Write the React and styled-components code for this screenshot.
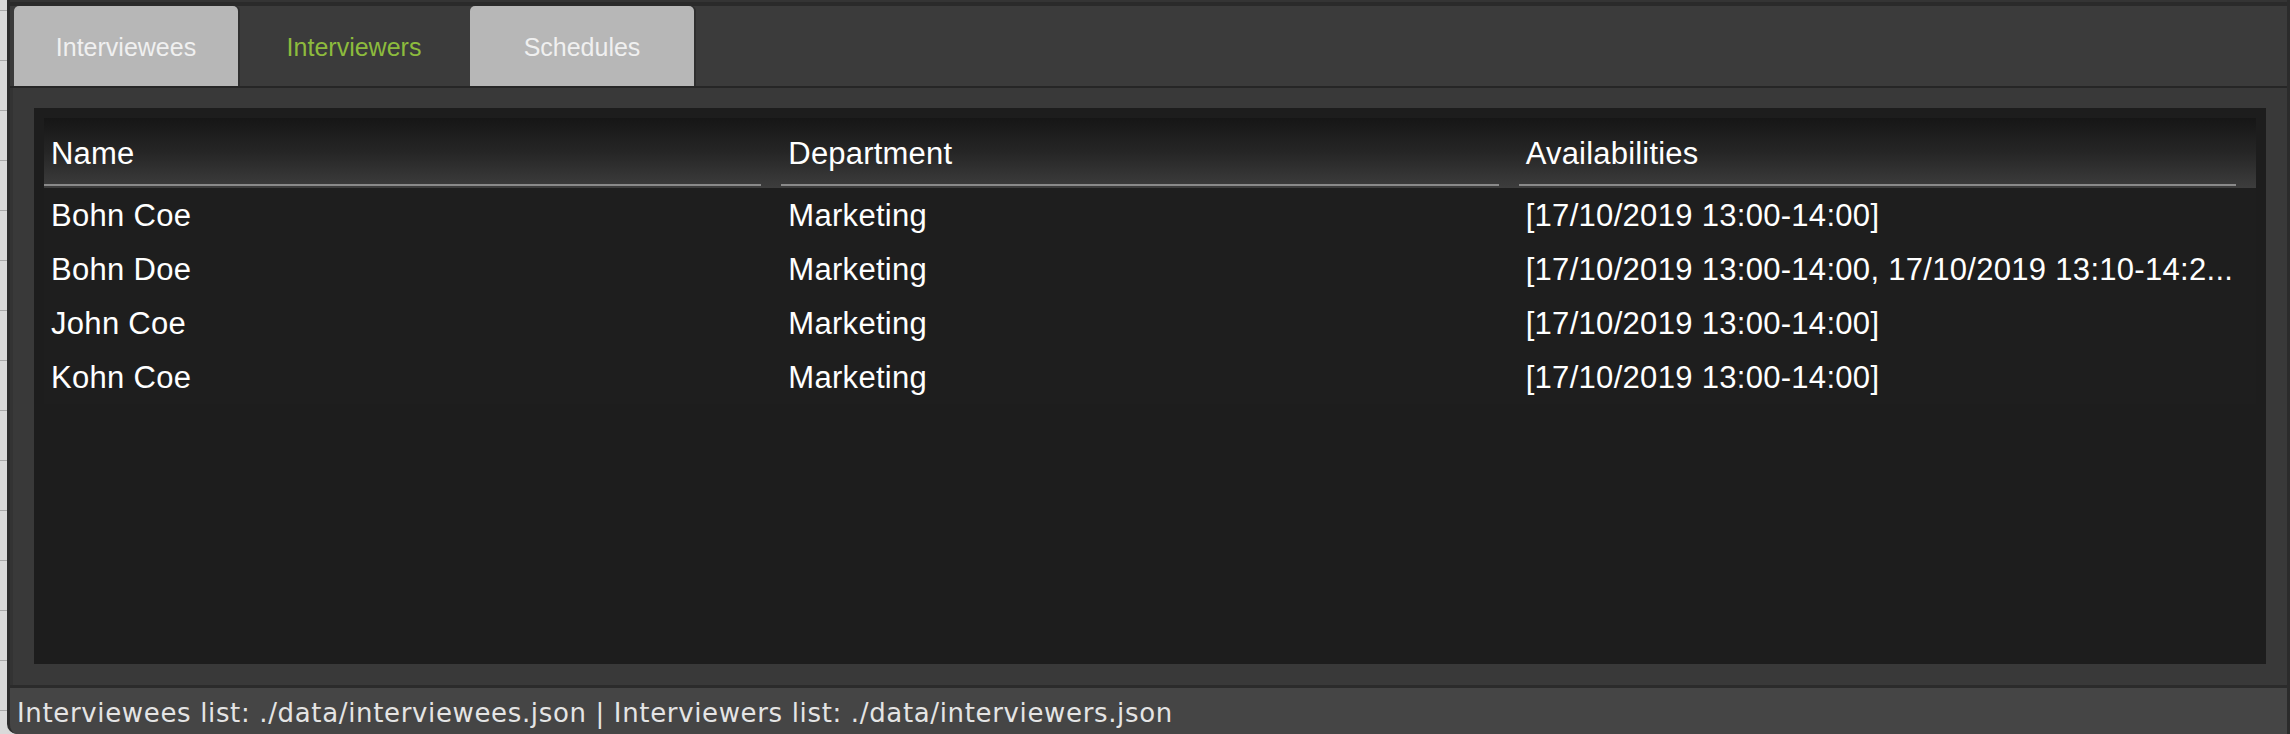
import React from 'react';
import styled, { createGlobalStyle } from 'styled-components';

const GlobalStyle = createGlobalStyle`
  html, body {
    margin: 0;
    padding: 0;
    width: 2290px;
    height: 734px;
    overflow: hidden;
    background: #d9d9d9;
  }
  * { box-sizing: border-box; }
`;

const Screen = styled.div`
  display: flex;
  width: 2290px;
  height: 734px;
  background: #d9d9d9;
`;

const DesktopStrip = styled.div`
  width: 7px;
  flex: none;
  background-color: #dadada;
  background-image: repeating-linear-gradient(
    to bottom,
    transparent 0,
    transparent 10px,
    #a9a9a9 10px,
    #a9a9a9 11px,
    transparent 11px,
    transparent 50px
  );
`;

const Window = styled.div`
  flex: 1;
  display: flex;
  flex-direction: column;
  border-left: 3px solid #2d2d2d;
  border-right: 3px solid #2b2b2b;
  border-bottom-left-radius: 10px;
  overflow: hidden;
  background: #393939;
`;

const TopEdge = styled.div`
  height: 6px;
  flex: none;
  background: linear-gradient(to bottom, #343434 0, #343434 2px, #2a2a2a 2px);
`;

const TabBar = styled.div`
  height: 82px;
  flex: none;
  display: flex;
  gap: 4px;
  padding-left: 4px;
  background: #3b3b3b;
  border-bottom: 2px solid #262626;
`;

const Tab = styled.div`
  width: 224px;
  height: 80px;
  padding-top: 3px;
  line-height: 77px;
  text-align: center;
  font-family: "Liberation Sans", Arial, sans-serif;
  font-size: 25px;
  border-radius: 5px 5px 0 0;
  background: ${(p) => (p.$active ? 'transparent' : '#b7b7b7')};
  color: ${(p) => (p.$active ? '#8dbb3d' : '#f0f0f0')};
  box-shadow: ${(p) => (p.$active ? 'none' : '2px 0 0 #2f2f2f')};
`;

const Panel = styled.div`
  flex: 1;
  display: flex;
  flex-direction: column;
  padding: 20px 21px 21px 21px;
  border-left: 3px solid #333333;
  background: #393939;
`;

const TableBox = styled.div`
  flex: 1;
  padding: 10px;
  background: #1d1d1d;
  display: flex;
  flex-direction: column;
`;

const HeaderRow = styled.div`
  display: grid;
  grid-template-columns: repeat(3, 1fr);
  height: 70px;
  background: linear-gradient(to bottom, #161616 0%, #262626 50%, #3d3d3d 100%);
`;

const HeaderCell = styled.div`
  display: flex;
  flex-direction: column;
  padding-top: 18px;
  padding-bottom: 2px;
  min-width: 0;
`;

const HeaderLabel = styled.div`
  height: 36px;
  line-height: 36px;
  padding-left: 7px;
  font-family: "Liberation Sans", Arial, sans-serif;
  font-size: 31px;
  letter-spacing: 0.2px;
  color: #ffffff;
  white-space: nowrap;
`;

const HeaderRule = styled.div`
  margin-top: 12px;
  margin-right: 20px;
  height: 2px;
  background: #8a8a8a;
`;

const Row = styled.div`
  display: grid;
  grid-template-columns: repeat(3, 1fr);
  height: 54px;
  padding-top: 2px;
  background: #1e1e1e;
`;

const Cell = styled.div`
  min-width: 0;
  padding-left: 7px;
  padding-right: 20px;
  line-height: 52px;
  font-family: "Liberation Sans", Arial, sans-serif;
  font-size: 31px;
  letter-spacing: 0.3px;
  color: #ffffff;
  white-space: nowrap;
  overflow: hidden;
  text-overflow: ellipsis;
`;

const StatusBar = styled.div`
  height: 49px;
  flex: none;
  padding: 5px 0 0 7px;
  border-top: 3px solid #2b2b2b;
  background: #454545;
  font-family: "DejaVu Sans", Verdana, sans-serif;
  font-size: 26px;
  letter-spacing: 0.65px;
  line-height: 41px;
  color: #e4e4e4;
  white-space: nowrap;
`;

const interviewers = [
  { name: 'Bohn Coe', dept: 'Marketing', avail: '[17/10/2019 13:00-14:00]' },
  { name: 'Bohn Doe', dept: 'Marketing', avail: '[17/10/2019 13:00-14:00, 17/10/2019 13:10-14:2...' },
  { name: 'John Coe', dept: 'Marketing', avail: '[17/10/2019 13:00-14:00]' },
  { name: 'Kohn Coe', dept: 'Marketing', avail: '[17/10/2019 13:00-14:00]' },
];

const columns = ['Name', 'Department', 'Availabilities'];

export default function App() {
  return (
    <>
      <GlobalStyle />
      <Screen>
        <DesktopStrip />
        <Window>
          <TopEdge />
          <TabBar>
            <Tab>Interviewees</Tab>
            <Tab $active>Interviewers</Tab>
            <Tab>Schedules</Tab>
          </TabBar>
          <Panel>
            <TableBox>
              <HeaderRow>
                {columns.map((c) => (
                  <HeaderCell key={c}>
                    <HeaderLabel>{c}</HeaderLabel>
                    <HeaderRule />
                  </HeaderCell>
                ))}
              </HeaderRow>
              {interviewers.map((r) => (
                <Row key={r.name}>
                  <Cell>{r.name}</Cell>
                  <Cell>{r.dept}</Cell>
                  <Cell>{r.avail}</Cell>
                </Row>
              ))}
            </TableBox>
          </Panel>
          <StatusBar>
            Interviewees list: ./data/interviewees.json | Interviewers list: ./data/interviewers.json
          </StatusBar>
        </Window>
      </Screen>
    </>
  );
}
